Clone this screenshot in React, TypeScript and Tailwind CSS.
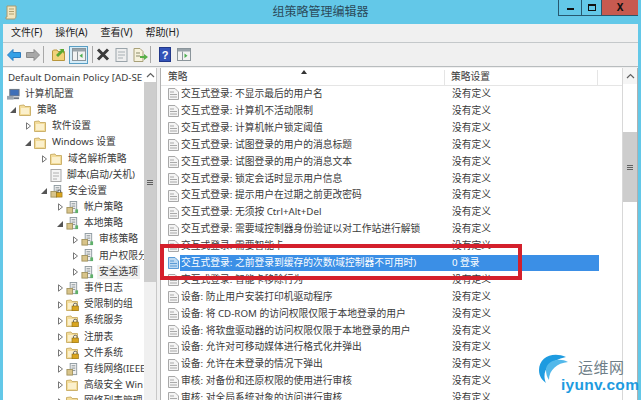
import React from "react";

const font = { fontFamily: '"Noto Sans", "Noto Sans CJK SC", sans-serif' };

function PolicyIcon({ blue = false }: { blue?: boolean }) {
  const s = blue ? "#5b9bd5" : "#a8a8a8";
  const f = blue ? "#bcd9f2" : "#f4f4f4";
  return (
    <svg width="11" height="12" viewBox="0 0 11 12" className="shrink-0">
      <path d="M.5 .5H7L10.5 4V11.5H.5Z" fill={f} stroke={s} />
      <path d="M2 4H6M2 6.5H9M2 9H9" stroke={s} strokeWidth="1" />
    </svg>
  );
}

function Folder({ lock = false }: { lock?: boolean }) {
  return (
    <svg width="13" height="12" viewBox="0 0 13 12" className="shrink-0">
      <path d="M.5 1.5V11.5H11.5V2.5H6L5 1Z" fill="#f3dc9a" stroke="#cdb26c" />
      <path d="M2 4H10V10H2Z" fill="#fbf0cc" />
      {lock && (
        <g>
          <rect x="6" y="7" width="6.5" height="4.8" fill="#d9a520" stroke="#8a6a10" strokeWidth=".6" />
          <path d="M7.5 7V5.3C7.5 3.9 11 3.9 11 5.3V7" fill="none" stroke="#666" />
        </g>
      )}
    </svg>
  );
}

function Sheet({ lock = false, green = true }: { lock?: boolean; green?: boolean }) {
  return (
    <svg width="13" height="13" viewBox="0 0 14 14" className="shrink-0">
      <rect x="4.5" y=".5" width="7" height="12" fill="#f0f0f0" stroke="#8f9aa0" />
      <path d="M6 3H10M6 5.5H10M6 8H10" stroke="#7f8a90" />
      <rect x="1" y="7" width="6" height="6" fill="#d8c48a" stroke="#a3945f" />
      {green && <rect x="10" y="9" width="3" height="4" fill="#5fb06a" />}
      {lock && (
        <g>
          <rect x="7" y="8" width="6" height="5" fill="#d9a520" stroke="#8a6a10" strokeWidth=".6" />
          <path d="M8.5 8V6.5C8.5 5 11.5 5 11.5 6.5V8" fill="none" stroke="#555" />
        </g>
      )}
    </svg>
  );
}

function Arrow({ open = false }: { open?: boolean }) {
  return (
    <svg width="7" height="8" viewBox="0 0 7 8" className="shrink-0">
      {open ? <path d="M6 1V7H0Z" fill="#555" /> : <path d="M1.5 .8L5.5 4L1.5 7.2Z" fill="#fff" stroke="#777" />}
    </svg>
  );
}

function PanelIcon({ green = "#4caf50", dir = "l" }: { green?: string; dir?: string }) {
  return (
    <svg width="14" height="13" viewBox="0 0 14 13">
      <rect x=".5" y=".5" width="13" height="12" fill="#f2f2f2" stroke="#8b959b" />
      <rect x="1" y="1" width="12" height="2.5" fill="#9aa4aa" />
      <path d="M5.5 3.5V12.5" stroke="#8b959b" />
      {dir === "l" ? <path d="M10.5 5.5V10L7.5 7.7Z" fill={green} /> : <path d="M7.5 5.5V10L10.5 7.7Z" fill={green} />}
    </svg>
  );
}

type Node = { t: string; d: number; a?: "o" | "c"; i: React.ReactNode; sel?: boolean };

const tree: Node[] = [
  { t: "计算机配置", d: 5, i: (
    <svg width="13" height="13" viewBox="0 0 14 13" className="shrink-0"><rect x="3" y="1" width="10" height="7" fill="#3e6fb8" stroke="#6b7480" /><rect x="0" y="8" width="7" height="4" fill="#9aa4ae" /><rect x="7" y="9.5" width="6" height="2" fill="#6b7480" /></svg>
  ) },
  { t: "策略", d: 0, a: "o", i: <Folder /> },
  { t: "软件设置", d: 1, a: "c", i: <Folder /> },
  { t: "Windows 设置", d: 1, a: "o", i: <Folder /> },
  { t: "域名解析策略", d: 2, a: "c", i: <Folder /> },
  { t: "脚本(启动/关机)", d: 2, i: (
    <svg width="12" height="13" viewBox="0 0 12 13" className="shrink-0"><rect x="1" y=".5" width="10" height="12" fill="#f5f5f5" stroke="#a8a8a8" /><path d="M3 4H9M3 7H9M3 10H7" stroke="#b0b0b0" /></svg>
  ) },
  { t: "安全设置", d: 2, a: "o", i: <Sheet lock green={false} /> },
  { t: "帐户策略", d: 3, a: "c", i: <Sheet /> },
  { t: "本地策略", d: 3, a: "o", i: <Sheet /> },
  { t: "审核策略", d: 4, a: "c", i: <Sheet /> },
  { t: "用户权限分", d: 4, a: "c", i: <Sheet /> },
  { t: "安全选项", d: 4, a: "c", i: <Sheet />, sel: true },
  { t: "事件日志", d: 3, a: "c", i: <Sheet /> },
  { t: "受限制的组", d: 3, a: "c", i: <Folder lock /> },
  { t: "系统服务", d: 3, a: "c", i: <Folder lock /> },
  { t: "注册表", d: 3, a: "c", i: <Folder lock /> },
  { t: "文件系统", d: 3, a: "c", i: <Folder lock /> },
  { t: "有线网络(IEEE", d: 3, a: "c", i: <Sheet green={false} /> },
  { t: "高级安全 Win", d: 3, a: "c", i: <Folder /> },
  { t: "网络列表管理", d: 3, a: "c", i: <Folder /> },
];

const rows: [string, string][] = [
  ["交互式登录: 不显示最后的用户名", "没有定义"],
  ["交互式登录: 计算机不活动限制", "没有定义"],
  ["交互式登录: 计算机帐户锁定阈值", "没有定义"],
  ["交互式登录: 试图登录的用户的消息标题", "没有定义"],
  ["交互式登录: 试图登录的用户的消息文本", "没有定义"],
  ["交互式登录: 锁定会话时显示用户信息", "没有定义"],
  ["交互式登录: 提示用户在过期之前更改密码", "没有定义"],
  ["交互式登录: 无须按 Ctrl+Alt+Del", "没有定义"],
  ["交互式登录: 需要域控制器身份验证以对工作站进行解锁", "没有定义"],
  ["交互式登录: 需要智能卡", "没有定义"],
  ["交互式登录: 之前登录到缓存的次数(域控制器不可用时)", "0 登录"],
  ["交互式登录: 智能卡移除行为", "没有定义"],
  ["设备: 防止用户安装打印机驱动程序", "没有定义"],
  ["设备: 将 CD-ROM 的访问权限仅限于本地登录的用户", "没有定义"],
  ["设备: 将软盘驱动器的访问权限仅限于本地登录的用户", "没有定义"],
  ["设备: 允许对可移动媒体进行格式化并弹出", "没有定义"],
  ["设备: 允许在未登录的情况下弹出", "没有定义"],
  ["审核: 对备份和还原权限的使用进行审核", "没有定义"],
  ["审核: 对全局系统对象的访问进行审核", "没有定义"],
];

const pads = ["pl-[6px]", "pl-[21px]", "pl-[37px]", "pl-[53px]", "pl-[68px]", "pl-[4px]"];

function Chevron({ up = true }: { up?: boolean }) {
  return (
    <svg width="9" height="6" viewBox="0 0 9 6">
      <path d={up ? "M1 5L4.5 1.5L8 5" : "M1 1L4.5 4.5L8 1"} fill="none" stroke="#606060" strokeWidth="1.2" />
    </svg>
  );
}

function Grip() {
  return (
    <div className="flex flex-col gap-[1px]">
      <div className="w-[6px] h-[1px] bg-[#606060]" />
      <div className="w-[6px] h-[1px] bg-[#606060]" />
      <div className="w-[6px] h-[1px] bg-[#606060]" />
    </div>
  );
}

export default function App() {
  return (
    <div style={font} className="relative w-[641px] h-[400px] overflow-hidden bg-[#63c8e8] text-[9.75px] text-[#3a3a3a] flex flex-col">
      {/* title bar */}
      <div className="relative h-[24px] shrink-0 flex items-center justify-center">
        <svg width="12" height="15" viewBox="0 0 12 15" className="absolute left-[5px] top-[5px]">
          <path d="M2 1H11V11C11 13 10 14 9 14H1V12H2Z" fill="#f2e6c0" stroke="#a89a70" />
          <path d="M4 4H9M4 6.5H9M4 9H9" stroke="#b0a070" />
        </svg>
        <span className="text-[12px] text-[#2b4a5a]">组策略管理编辑器</span>
        <div className="absolute right-[3px] top-0 flex h-[16px]">
          <div className="w-[23px] border-l border-b border-[#27586f] flex items-center justify-center">
            <div className="w-[7px] h-[2px] bg-[#111] mt-[3px]" />
          </div>
          <div className="w-[20px] border-l border-b border-[#27586f] flex items-center justify-center">
            <div className="w-[8px] h-[7px] border border-t-2 border-[#111]" />
          </div>
          <div className="w-[37px] bg-[#c75a50] border-l border-b border-[#27586f] flex items-center justify-center text-[#111] text-[10px] font-bold">X</div>
        </div>
      </div>

      <div className="flex-1 mx-[3px] flex flex-col min-h-0 bg-[#f0f0f0]">
        {/* menu */}
        <div className="h-[19px] shrink-0 flex items-center pl-[8px] gap-[13px] border-b border-[#c4c8ca] text-[#222] pb-[1px] text-[10px]">
          <span>文件(F)</span>
          <span>操作(A)</span>
          <span>查看(V)</span>
          <span>帮助(H)</span>
        </div>
        {/* toolbar */}
        <div className="h-[23px] shrink-0 flex items-center pl-[4px]">
          <svg width="14" height="12" viewBox="0 0 14 12"><path d="M6 .5L.5 6L6 11.5V8.5H13.5V3.5H6Z" fill="#35a0e6" stroke="#2b7cc0" /></svg>
          <svg width="14" height="12" viewBox="0 0 14 12" className="ml-[5px]"><path d="M8 .5L13.5 6L8 11.5V8.5H.5V3.5H8Z" fill="#a8a8a8" stroke="#8a8a8a" /></svg>
          <div className="w-[1px] h-[17px] bg-[#a8a8a8] ml-[3px]" />
          <svg width="14" height="13" viewBox="0 0 14 13" className="ml-[8px]"><path d="M.5 3V12.5H12.5V3.5H6L5 2H1.5Z" fill="#f2d27a" stroke="#b8963c" /><path d="M4 7L9 2L7 1H12V6L11 4L6 9Z" fill="#5aa832" /></svg>
          <div className="ml-[3px] w-[19px] h-[18px] bg-[#d5ecf8] border border-[#5a9fc4] flex items-center justify-center">
            <PanelIcon />
          </div>
          <div className="w-[1px] h-[17px] bg-[#a8a8a8] ml-[4px]" />
          <svg width="14" height="13" viewBox="0 0 14 13" className="ml-[3px]"><path d="M2 1.5L12 11.5M12 1.5L2 11.5" stroke="#3c3c3c" strokeWidth="3" /></svg>
          <svg width="13" height="14" viewBox="0 0 13 14" className="ml-[5px]"><rect x="1" y=".5" width="11" height="13" fill="#eee" stroke="#9aa4aa" /><path d="M3 4H10M3 7H10M3 10H8" stroke="#a8b0b4" /></svg>
          <svg width="15" height="14" viewBox="0 0 15 14" className="ml-[5px]"><path d="M1 .5H7L10 3.5V13.5H1Z" fill="#f6f2dc" stroke="#a8a078" /><path d="M3 5H7M3 8H7" stroke="#8a8a6a" /><path d="M7 8H11V6L15 9L11 12V10H7Z" fill="#58b048" /></svg>
          <div className="w-[1px] h-[17px] bg-[#a8a8a8] ml-[2px]" />
          <svg width="12" height="15" viewBox="0 0 12 15" className="ml-[8px]"><rect x=".5" y=".5" width="11" height="14" fill="#3353b8" stroke="#22388a" /><text x="6" y="12" fontSize="11" fontWeight="700" fill="#fff" textAnchor="middle" fontFamily="Liberation Sans">?</text></svg>
          <div className="ml-[6px]"><PanelIcon dir="r" /></div>
        </div>

        {/* panels */}
        <div className="flex-1 flex min-h-0 border-t border-[#b8bcbe] overflow-hidden">
          {/* left */}
          <div className="w-[154px] shrink-0 bg-white border-r border-[#c8c8c8] flex mt-[1px]">
            <div className="w-[142px] overflow-hidden">
              <div className="h-[16px] mt-[2px] flex items-center pl-[5px] whitespace-nowrap">Default Domain Policy [AD-SE</div>
              {tree.map((n) => (
                <div key={n.t} className={`h-[16.2px] flex items-center whitespace-nowrap ${pads[n.d]}`}>
                  {n.d !== 5 && (
                    <span className="w-[8px] mr-[2px] shrink-0 flex justify-center">
                      {n.a ? <Arrow open={n.a === "o"} /> : null}
                    </span>
                  )}
                  {n.i}
                  <span className={`ml-[3px] px-[2px] ${n.sel ? "bg-[#f0f0f0]" : ""}`}>{n.t}</span>
                </div>
              ))}
            </div>
            <div className="w-[12px] shrink-0 bg-[#f0f0f0] flex flex-col">
              <div className="h-[14px] bg-white flex items-center justify-center"><Chevron /></div>
              <div className="h-[200px] bg-[#cdcdcd] flex items-center justify-center"><Grip /></div>
            </div>
          </div>
          <div className="w-[3px] shrink-0 bg-[#f0f0f0]" />
          {/* right */}
          <div className="flex-1 bg-white flex border-x border-[#b0b0b0] mt-[1px] min-w-0">
            <div className="flex-1 min-w-0 flex flex-col">
              <div className="h-[16px] mt-[2px] shrink-0 flex border-b border-[#e5e5e5] relative">
                <div className="w-[284px] border-r border-[#e5e5e5] pl-[7px] flex items-center">策略</div>
                <div className="w-[153px] border-r border-[#e5e5e5] pl-[6px] flex items-center">策略设置</div>
                <svg width="6" height="4" viewBox="0 0 6 4" className="absolute left-[140px] top-0"><path d="M3 0L6 4H0Z" fill="#333" /></svg>
              </div>
              <div>
                {rows.map(([a, b], i) => (
                  <div key={a} className="h-[16.9px] flex items-center whitespace-nowrap">
                    <div className="w-[285px] shrink-0 flex items-center pl-[7px]">
                      <PolicyIcon blue={i === 10} />
                      <span className={i === 10 ? "ml-[1px] pl-[1px] flex-1 bg-[#3b8fe6] text-white leading-[16px]" : "ml-[2px]"}>{a}</span>
                    </div>
                    <div className={i === 10 ? "w-[153px] pl-[6px] bg-[#3b8fe6] text-white leading-[16px]" : "pl-[6px]"}>{b}</div>
                  </div>
                ))}
              </div>
            </div>
            <div className="w-[15px] shrink-0 bg-white border-l border-[#d8d8d8] flex flex-col">
              <div className="h-[16px] bg-[#f5f5f5] flex items-center justify-center"><Chevron /></div>
              <div className="h-[48px]" />
              <div className="h-[70px] bg-[#cdcdcd] flex items-center justify-center"><Grip /></div>
            </div>
          </div>
        </div>
      </div>

      {/* red annotation */}
      <div className="absolute left-[160px] top-[244px] w-[362px] h-[36px] border-[4px] border-[#d4202c]" />

      {/* watermark */}
      <div className="absolute left-[537px] top-[352px] w-[104px] h-[48px]">
        <svg width="34" height="34" viewBox="0 0 34 34" className="absolute left-0 top-0">
          <path d="M29 5C16 -1 2 5 2 18C2 24 5 28 9 31C5 22 8 10 29 5Z" fill="#1e9be0" />
          <path d="M31 10C22 5 9 9 9 18C9 22 10 25 12 28C12 18 20 11 31 10Z" fill="#52b8ea" />
        </svg>
        <span className="absolute left-[41px] top-[8px] text-[15px] leading-[15px] text-[#6f7f88] tracking-[0.5px]">运维网</span>
        <span className="absolute left-[24px] top-[25px] text-[15.5px] leading-[16px] font-bold text-[#1e9be0] whitespace-nowrap tracking-[0.3px]" style={{ fontFamily: '"Liberation Sans", sans-serif' }}>iyunv.com</span>
      </div>
    </div>
  );
}
